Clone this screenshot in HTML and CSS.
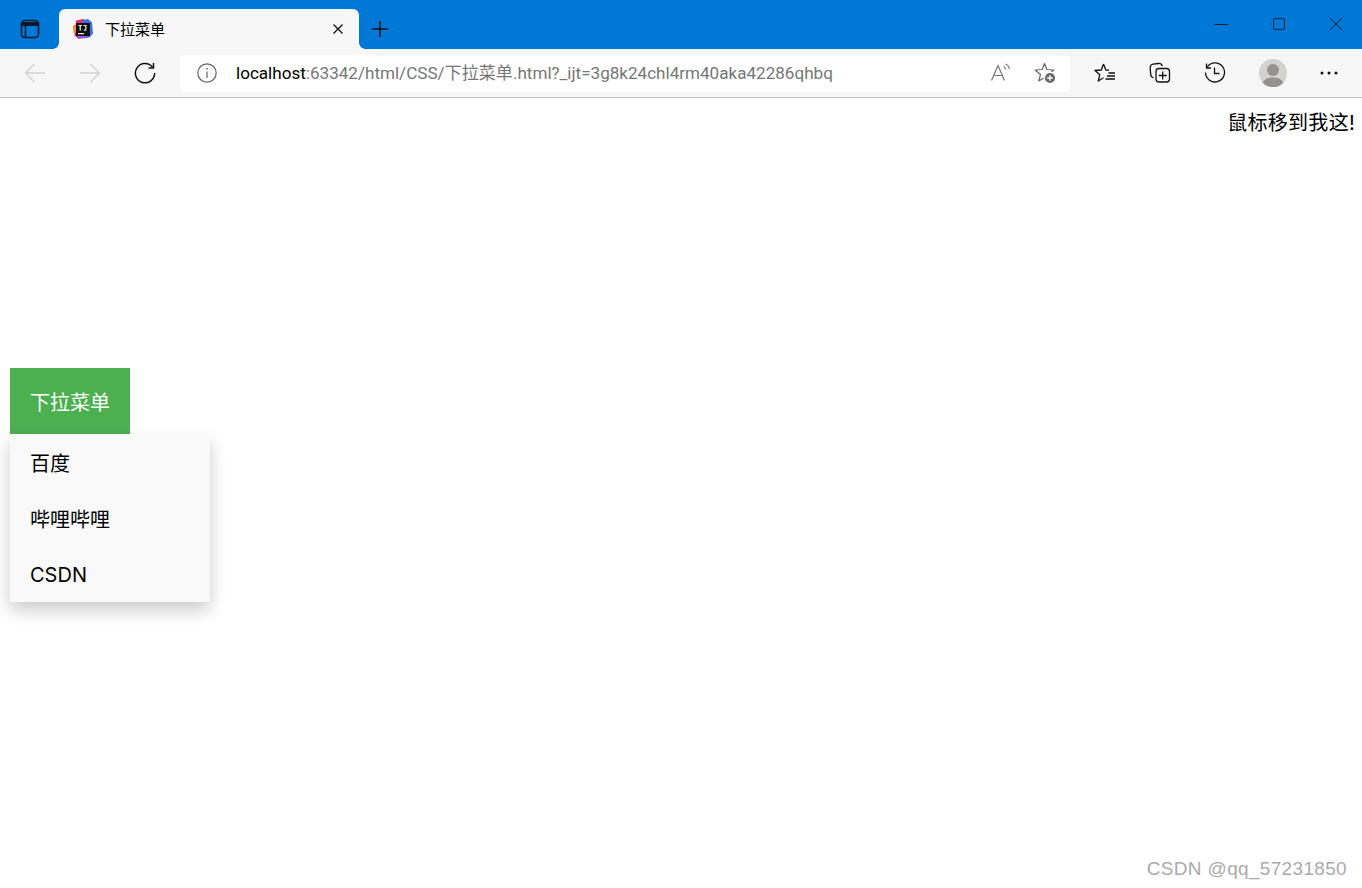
FILE: index.html
```html
<!DOCTYPE html>
<html>
<head>
  <title>下拉菜单</title>
  <meta charset="utf-8">
  <link rel="stylesheet" href="styles.css">
</head>
<body>
  <!-- Title bar -->
  <div class="titlebar">
    <div class="tab-actions">
      <svg width="20" height="20" viewBox="0 0 20 20" fill="none" stroke="#0a1a2a" stroke-width="1.6"><rect x="1.5" y="1.500" width="17" height="17" rx="3.500"/><path d="M2 5h16" stroke-width="4"/><path d="M5.500 6v12"/></svg>
    </div>
    <div class="tab">
      <svg class="favicon" width="20" height="20" viewBox="0 0 20 20">
        <path d="M3 1.500L10 0l4 1.500-2 17-7 1-3.500-3z" fill="#ee2a6f"/>
        <path d="M9 1.500l6-1.500 4 3.500 1 11-3.500 4-7 1z" fill="#3f6fec"/>
        <path d="M0 6.500l4-1 1 7.500-4.500 1z" fill="#f58a1f"/>
        <path d="M3 15h8l1 4-7 1z" fill="#b84bd6"/>
        <rect x="3" y="4" width="14" height="13" fill="#111"/>
        <rect x="5" y="14" width="6" height="1.300" fill="#ddd"/>
        <path d="M5.500 6.500h3.500M7.200 6.500v5M10.500 6.500h3M12.800 6.500v4.300l-1.800.6" fill="none" stroke="#eee" stroke-width="1.200"/>
      </svg>
      <span class="tab-title">下拉菜单</span>
      <svg class="tab-close" width="12" height="12" viewBox="0 0 12 12" stroke="#111" stroke-width="1.300"><path d="M1.500 1.500l9 9M10.500 1.500l-9 9"/></svg>
    </div>
    <div class="new-tab">
      <svg width="18" height="18" viewBox="0 0 18 18" stroke="#111" stroke-width="1.500"><path d="M9 1v16M1 9h16"/></svg>
    </div>
    <div class="window-controls">
      <div class="win-btn"><svg width="14" height="14" viewBox="0 0 14 14" stroke="#0a1a2a" stroke-width="1"><path d="M0 7.500h14"/></svg></div>
      <div class="win-btn"><svg width="14" height="14" viewBox="0 0 14 14" fill="none" stroke="#0a1a2a" stroke-width="1"><rect x="1.500" y="1.500" width="11" height="11" rx="2"/></svg></div>
      <div class="win-btn"><svg width="14" height="14" viewBox="0 0 14 14" stroke="#0a1a2a" stroke-width="1"><path d="M.5.5l13 13M13.500.5l-13 13"/></svg></div>
    </div>
  </div>

  <!-- Toolbar -->
  <div class="toolbar">
    <div class="tool-btn"><svg width="22" height="22" viewBox="0 0 22 22" fill="none" stroke="#d2d2d2" stroke-width="1.400"><path d="M21 11H1.500M10.500 2l-9 9 9 9"/></svg></div>
    <div class="tool-btn"><svg width="22" height="22" viewBox="0 0 22 22" fill="none" stroke="#d2d2d2" stroke-width="1.400"><path d="M1 11h19.500M11.500 2l9 9-9 9"/></svg></div>
    <div class="tool-btn"><svg width="22" height="22" viewBox="0 0 22 22" fill="none" stroke="#111" stroke-width="1.500"><path d="M18.500 5.200A9.600 9.600 0 1 0 20.600 11"/><path d="M19.500 1v5h-5"/></svg></div>
    <div class="address">
      <svg class="info" width="20" height="20" viewBox="0 0 20 20" fill="none" stroke="#666" stroke-width="1.200"><circle cx="10" cy="10" r="9.200"/><path d="M10 8.500V15"/><path d="M10 5v1.600" stroke-width="1.500"/></svg>
      <span class="url"><span class="host">localhost</span>:63342/html/CSS/下拉菜单.html?_ijt=3g8k24chl4rm40aka42286qhbq</span>
      <div class="address-icons">
        <svg width="22" height="22" viewBox="0 0 22 22" fill="none" stroke="#777" stroke-width="1.200"><path d="M1.500 18.500L8 3.500l6.500 15M3.800 13.500h8.400"/><path d="M13.500 4.500c1.300.6 2 1.500 2.200 3M15.500 2c2.300.9 3.600 2.700 3.800 5"/></svg>
        <svg width="24" height="24" viewBox="0 0 24 24"><path d="M11.500 2.500l2.400 6 6.900.5-5.300 4.500 1.700 6.500-5.700-3.500-5.700 3.500 1.700-6.500L2.200 9l6.900-.5z" fill="none" stroke="#666" stroke-width="1.200" stroke-linejoin="round"/><circle cx="17" cy="17" r="6.500" fill="#fff"/><circle cx="17" cy="17" r="5" fill="#666"/><path d="M17 14.200v5.600M14.200 17h5.600" stroke="#fff" stroke-width="1.400"/></svg>
      </div>
    </div>
    <div class="tool-btn first-right"><svg width="22" height="22" viewBox="0 0 22 22" fill="none" stroke="#111" stroke-width="1.300" stroke-linejoin="round"><path d="M9.500 2L7.200 8l-6.200.5 4.800 4.200-1.600 6.300 5.300-3.200M9.500 2l2.300 6 3.200.2"/><path d="M14.500 11h6.500M13 14h8M11.500 17h9.500"/></svg></div>
    <div class="tool-btn"><svg width="22" height="22" viewBox="0 0 22 22" fill="none" stroke="#111" stroke-width="1.300"><rect x="7" y="6.500" width="13.500" height="13.500" rx="3"/><path d="M13.700 9.500v8M9.700 13.500h8"/><path d="M4.500 16C3 15.500 2 14.500 1.700 13L1.200 6c-.1-2 1-3.500 3-3.800L9.500 1.500c1.700-.2 3.200.7 3.800 2.500"/></svg></div>
    <div class="tool-btn"><svg width="22" height="22" viewBox="0 0 22 22" fill="none" stroke="#111" stroke-width="1.300"><path d="M3.200 5A9.500 9.500 0 1 1 1.500 10.500"/><path d="M2.500 1.500V6h4.500"/><path d="M10.500 5.500v6h5"/></svg></div>
    <div class="tool-btn profile-btn">
      <svg width="28" height="28" viewBox="0 0 28 28"><circle cx="14" cy="14" r="14" fill="#d4d2cf"/><circle cx="14" cy="11" r="6" fill="#96928e"/><path d="M3.500 23.500C6 19.500 10 18.500 14 18.500s8 1 10.500 5A14 14 0 0 1 3.500 23.500z" fill="#96928e"/></svg>
    </div>
    <div class="tool-btn more-btn"><svg width="18" height="4" viewBox="0 0 18 4" fill="#111"><circle cx="2" cy="2" r="1.500"/><circle cx="9" cy="2" r="1.500"/><circle cx="16" cy="2" r="1.500"/></svg></div>
  </div>

  <!-- Page -->
  <div class="page">
    <div class="hint">鼠标移到我这!</div>
    <div class="dropdown">
      <div class="dropbtn">下拉菜单</div>
      <div class="dropdown-content">
        <a href="#">百度</a>
        <a href="#">哔哩哔哩</a>
        <a href="#">CSDN</a>
      </div>
    </div>
    <div class="watermark">CSDN @qq_57231850</div>
  </div>
</body>
</html>
```
FILE: styles.css
```css
/* Base Styles */
body, html {
  margin: 0;
  padding: 0;
  height: 100%;
  overflow: hidden;
  background: #fff;
  font-family: Inter, "Noto Sans CJK SC", sans-serif;
}

body {
  display: flex;
  flex-direction: column;
}

svg {
  display: block;
}

/* Title bar */
.titlebar {
  display: flex;
  align-items: flex-end;
  height: 49px;
  background: #0078d7;
  flex-shrink: 0;
}

.tab-actions {
  width: 59px;
  height: 40px;
  display: flex;
  align-items: center;
  justify-content: center;
}

.tab {
  position: relative;
  width: 300px;
  height: 40px;
  box-sizing: border-box;
  padding: 0 15px 0 14px;
  display: flex;
  align-items: center;
  background: #f7f7f7;
  border-radius: 6px 6px 0 0;
}

/* little flares where the tab meets the toolbar */
.tab::before,
.tab::after {
  content: "";
  position: absolute;
  bottom: 0;
  width: 6px;
  height: 6px;
}

.tab::before {
  left: -6px;
  background: radial-gradient(circle at 0 0, #0078d7 5.500px, #f7f7f7 6px);
}

.tab::after {
  right: -6px;
  background: radial-gradient(circle at 100% 0, #0078d7 5.500px, #f7f7f7 6px);
}

.favicon {
  margin-right: 12px;
}

.tab-title {
  flex: 1;
  font-size: 15px;
  color: #000;
  margin-bottom: 2px;
}

.new-tab {
  width: 42px;
  height: 40px;
  display: flex;
  align-items: center;
  justify-content: center;
}

.window-controls {
  margin-left: auto;
  display: flex;
  align-self: flex-start;
  gap: 11.500px;
  padding-right: 3px;
}

.win-btn {
  width: 46px;
  height: 48px;
  display: flex;
  align-items: center;
  justify-content: center;
}

/* Toolbar */
.toolbar {
  display: flex;
  align-items: center;
  height: 49px;
  box-sizing: border-box;
  padding-left: 7px;
  background: #f7f7f7;
  border-bottom: 1px solid #c0c0c0;
  flex-shrink: 0;
}

.tool-btn {
  width: 55px;
  height: 36px;
  display: flex;
  align-items: center;
  justify-content: center;
}

.address {
  width: 890px;
  height: 37px;
  margin-left: 8px;
  box-sizing: border-box;
  padding: 0 13px 0 17px;
  display: flex;
  align-items: center;
  background: #fff;
  border-radius: 5px;
}

.info {
  margin-right: 19px;
}

.url {
  flex: 1;
  margin-bottom: 4px;
  font-family: Roboto, "Noto Sans CJK SC", sans-serif;
  font-size: 17.080px;
  color: #767676;
  white-space: nowrap;
}

.host {
  color: #000;
}

.address-icons {
  display: flex;
  align-items: center;
  gap: 21px;
}

.first-right {
  margin-left: 7px;
}

.profile-btn {
  margin-left: 3px;
}

.more-btn {
  margin-left: 1px;
}

/* Page */
.page {
  flex: 1;
  position: relative;
  font-size: 20px;
  color: #000;
}

.hint {
  height: 270px;
  box-sizing: border-box;
  padding: 11px 7px 0 0;
  text-align: right;
  line-height: 28px;
  letter-spacing: 0.3px;
}

.dropdown {
  margin-left: 10px;
  width: 200px;
}

.dropbtn {
  width: 120px;
  height: 66px;
  box-sizing: border-box;
  padding-top: 4px;
  line-height: 62px;
  text-align: center;
  color: #fff;
  background: #4caf50;
}

.dropdown-content {
  background: #f9f9f9;
  box-shadow: 0 8px 16px rgba(0, 0, 0, 0.2);
}

.dropdown-content a {
  display: block;
  height: 56px;
  box-sizing: border-box;
  padding: 4px 20px 0;
  line-height: 52px;
  color: #000;
  text-decoration: none;
}

.dropdown-content a:last-child {
  padding-top: 2px;
  line-height: 54px;
}

/* CSDN stamp over the screenshot */
.watermark {
  position: absolute;
  right: 15px;
  bottom: 8px;
  font-family: "Liberation Sans", sans-serif;
  font-size: 19px;
  letter-spacing: 0.33px;
  color: #aaa;
}
```
